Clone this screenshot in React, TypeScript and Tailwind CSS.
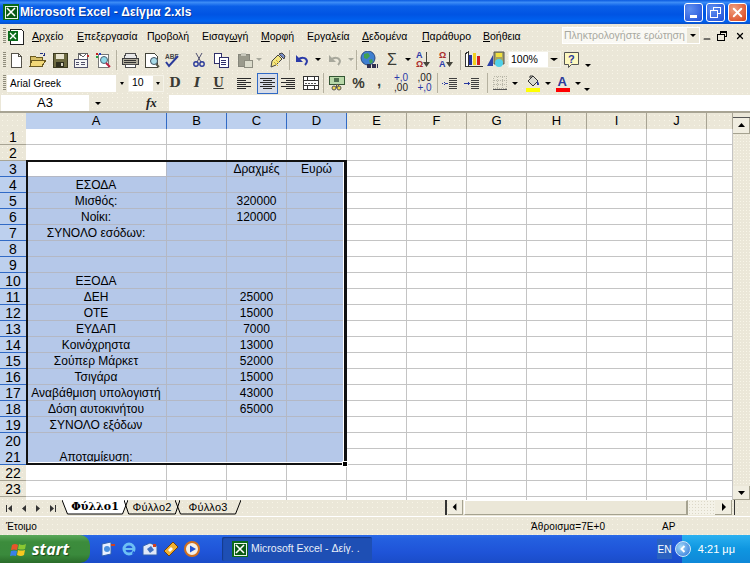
import React from 'react';
import { Minus, X } from 'lucide-react';

const COLS = ['A', 'B', 'C', 'D', 'E', 'F', 'G', 'H', 'I', 'J', ''];
const COL_W = ['w-[141px]', 'w-[60px]', 'w-[60px]', 'w-[60px]', 'w-[60px]', 'w-[60px]', 'w-[60px]', 'w-[60px]', 'w-[60px]', 'w-[60px]', 'w-[26px]'];

const DATA: Record<number, [string?, string?, string?, string?]> = {
  3: ['', '', 'Δραχμές', 'Ευρώ'],
  4: ['ΕΣΟΔΑ'],
  5: ['Μισθός:', '', '320000'],
  6: ['Νοίκι:', '', '120000'],
  7: ['ΣΥΝΟΛΟ εσόδων:'],
  10: ['ΕΞΟΔΑ'],
  11: ['ΔΕΗ', '', '25000'],
  12: ['ΟΤΕ', '', '15000'],
  13: ['ΕΥΔΑΠ', '', '7000'],
  14: ['Κοινόχρηστα', '', '13000'],
  15: ['Σούπερ Μάρκετ', '', '52000'],
  16: ['Τσιγάρα', '', '15000'],
  17: ['Αναβάθμιση υπολογιστή', '', '43000'],
  18: ['Δόση αυτοκινήτου', '', '65000'],
  19: ['ΣΥΝΟΛΟ εξόδων'],
  21: ['Αποταμίευση:'],
};

const Dots = 'bg-[#ebe7d8] bg-[radial-gradient(circle,#f8f5e8_0.8px,transparent_1px)] bg-[length:5px_5px]';

const Ico = ({ children, w = 16, h = 16 }: { children: React.ReactNode; w?: number; h?: number }) => (
  <svg width={w} height={h} viewBox={`0 0 ${w} ${h}`} shapeRendering="crispEdges">{children}</svg>
);

const Slot = ({ className, children }: { className: string; children?: React.ReactNode }) => (
  <div className={`${className} flex items-center justify-center shrink-0 h-full`}>{children}</div>
);

const Grip = () => (
  <div className="w-[3px] h-[16px] ml-[3px] shrink-0 bg-[repeating-linear-gradient(180deg,#8f8c7c_0_1px,#ebe7d8_1px_2px)]" />
);

const Sep = () => <div className="w-[1px] h-[20px] bg-[#b5b1a0] mx-[1px] shrink-0" />;

const Caret = ({ color = '#000', size = 5 }: { color?: string; size?: number }) => (
  <div
    className="w-0 h-0 border-x-[3px] border-x-transparent border-t-[3px]"
    style={{ borderTopColor: color, borderLeftWidth: size - 2, borderRightWidth: size - 2 }}
  />
);

const Chevron = () => (
  <div className="flex flex-col items-center justify-end h-full pb-[4px]">
    <Caret size={5} />
  </div>
);

const NewIcon = () => (
  <Ico><path d="M3 1h7l3 3v11H3z" fill="#fff" stroke="#55534a" /><path d="M10 1v3h3" fill="none" stroke="#55534a" /></Ico>
);
const OpenIcon = () => (
  <Ico w={18}>
    <path d="M1 4h5l1 1h6v9H1z" fill="#d8c068" stroke="#6b5a20" />
    <path d="M3 8h14l-4 6H1z" fill="#f2d878" stroke="#6b5a20" />
    <path d="M11 1h3M15 1v3M16 3l-2 1" stroke="#1f2f80" fill="none" />
  </Ico>
);
const SaveIcon = () => (
  <Ico>
    <path d="M1 1h14v14H1z" fill="#6d6a40" stroke="#3c3a20" />
    <path d="M4 2h8v5H4z" fill="#e8e4cf" />
    <path d="M4 10h8v5H4z" fill="#2d2d1c" />
    <path d="M9 11h2v3H9z" fill="#d8d4c0" />
  </Ico>
);
const MailIcon = () => (
  <Ico w={18}>
    <path d="M5 1h9v7H5z" fill="#fff" stroke="#666" />
    <path d="M5 1l5 4 4-4" fill="none" stroke="#666" />
    <path d="M14 3h2v2h-2z" fill="#c03030" />
    <path d="M1 7h13v8H1z" fill="#f4f4f4" stroke="#50506a" />
    <path d="M3 10h3M8 10h4M3 12h3M8 12h4" stroke="#50506a" fill="none" />
  </Ico>
);
const SearchDocIcon = () => (
  <Ico w={18}>
    <path d="M3 2h10v13H3z" fill="#fff" stroke="#777" />
    <path d="M1 1h2v2H1z" fill="#c02020" /><path d="M4 1h2v2H4z" fill="#2040c0" /><path d="M1 4h2v2H1z" fill="#20a040" />
    <circle cx="9" cy="8" r="3.5" fill="#8fd8e8" stroke="#506070" shapeRendering="auto" />
    <path d="M11 11l4 4" stroke="#c02040" strokeWidth="2" shapeRendering="auto" />
  </Ico>
);
const PrintIcon = () => (
  <Ico w={18}>
    <path d="M5 1h9l2 5H3z" fill="#e8e8e8" stroke="#505050" />
    <path d="M1 6h16v6H1z" fill="#b0ac9c" stroke="#3c3c3c" />
    <path d="M3 8h12M3 10h12" stroke="#303030" fill="none" />
    <path d="M4 12h10v3H4z" fill="#fff" stroke="#505050" />
  </Ico>
);
const PreviewIcon = () => (
  <Ico w={18}>
    <path d="M2 1h9l3 3v11H2z" fill="#fff" stroke="#45453a" />
    <circle cx="11" cy="9" r="3.5" fill="#a8dbe8" stroke="#3e5060" shapeRendering="auto" />
    <path d="M13 12l3 3" stroke="#5a5a4a" strokeWidth="2" shapeRendering="auto" />
  </Ico>
);
const SpellIcon = () => (
  <svg width="18" height="16" viewBox="0 0 18 16">
    <text x="1" y="6.5" fontSize="6.5" fontWeight="700" fontFamily="Liberation Sans" fill="#444">ΑΒΓ</text>
    <path d="M2 10l3 4 9-10" fill="none" stroke="#2a3a9a" strokeWidth="2" />
  </svg>
);
const CutIcon = () => (
  <svg width="16" height="16" viewBox="0 0 16 16">
    <path d="M5 1l5 9M11 1l-5 9" stroke="#505070" strokeWidth="1" fill="none" />
    <circle cx="5" cy="12" r="2.2" fill="none" stroke="#2a3a9a" strokeWidth="1.4" />
    <circle cx="11" cy="12" r="2.2" fill="none" stroke="#2a3a9a" strokeWidth="1.4" />
  </svg>
);
const CopyIcon = () => (
  <Ico>
    <path d="M1 1h7v10H1z" fill="#fff" stroke="#30306a" />
    <path d="M6 5h9v10H6z" fill="#fff" stroke="#30306a" />
    <path d="M8 8h5M8 10h5M8 12h5" stroke="#30306a" fill="none" />
  </Ico>
);
const PasteIcon = () => (
  <Ico>
    <path d="M1 2h11v12H1z" fill="#9a9a8c" stroke="#85857a" />
    <path d="M4 1h5v3H4z" fill="#c8c8bc" />
    <path d="M7 8h8v7H7z" fill="#dcdccc" stroke="#8d8d80" />
  </Ico>
);
const BrushIcon = () => (
  <svg width="18" height="16" viewBox="0 0 18 16">
    <path d="M4 9l6-6 4 4-6 6-5 2z" fill="#f4e680" stroke="#444" />
    <path d="M6 10l4 4M8 8l3 3" stroke="#d0b030" fill="none" />
    <path d="M11 2l3-1 3 3-1 3z" fill="#7a90c8" stroke="#444" />
  </svg>
);
const UndoIcon = ({ c }: { c: string }) => (
  <svg width="14" height="12" viewBox="0 0 14 12">
    <path d="M3 6c3-3 8-3 9 1 0 2-1 3-2 4" fill="none" stroke={c} strokeWidth="2" />
    <path d="M1 1v7h7z" fill={c} />
  </svg>
);
const GlobeIcon = () => (
  <svg width="20" height="18" viewBox="0 0 20 18">
    <circle cx="8" cy="7" r="7" fill="#3f7fd0" stroke="#2a4a80" />
    <path d="M4 3l4-1 2 3-3 3-3-1zM9 9l3-1 1 3-3 2z" fill="#40a050" />
    <path d="M7 14h11M7 16h11" stroke="#303050" strokeWidth="2" strokeDasharray="4 1" />
  </svg>
);
const SortIcon = ({ top, bot, topC, botC }: { top: string; bot: string; topC: string; botC: string }) => (
  <div className="flex items-center">
    <div className="flex flex-col text-[9px] leading-[9px] font-bold [font-family:'Liberation_Sans',sans-serif]">
      <span style={{ color: topC }}>{top}</span>
      <span style={{ color: botC }}>{bot}</span>
    </div>
    <svg width="7" height="15" viewBox="0 0 7 15"><path d="M3 0h1v10h3l-3.5 5L0 10h3z" fill="#45453c" /></svg>
  </div>
);
const ChartIcon = () => (
  <Ico w={20} h={17}>
    <path d="M1 3l3-2v14H1z" fill="#fff" stroke="#333" />
    <path d="M5 4h3v10H5z" fill="#2030a0" />
    <path d="M9 2h3v12H9z" fill="#f0d020" />
    <path d="M13 5h3v9h-3z" fill="#d02020" />
    <path d="M1 15h18" stroke="#333" />
  </Ico>
);
const DrawingIcon = () => (
  <svg width="20" height="18" viewBox="0 0 20 18">
    <path d="M8 1h10v12H8z" fill="#a8a460" stroke="#555" />
    <path d="M10 2h6v4h-6z" fill="#f0e040" />
    <path d="M1 15L7 4v11z" fill="#2c40a8" />
    <circle cx="13" cy="12" r="4" fill="#50d0e8" />
  </svg>
);
const HelpIcon = () => (
  <svg width="18" height="18" viewBox="0 0 18 18">
    <path d="M1.5 1.5h14v12h-7l-3 3v-3h-4z" fill="#fdf8c0" stroke="#555" />
    <text x="5" y="12" fontSize="11" fontWeight="700" fontFamily="Liberation Sans" fill="#2a3a9a">?</text>
  </svg>
);
const Lines = ({ rows }: { rows: [number, number][] }) => (
  <Ico w={15} h={13}>
    {rows.map(([x, w], i) => (
      <path key={i} d={`M${x} ${i * 2 + 1.5}h${w}`} stroke="#2a2a2a" />
    ))}
  </Ico>
);
const MergeIcon = () => (
  <Ico w={16} h={14}>
    <path d="M.5.5h15v13H.5z" fill="#fff" stroke="#333" />
    <path d="M.5 4.5h15M.5 9.5h15M4.5.5v4M11.5.5v4M4.5 9.5v4M11.5 9.5v4" stroke="#333" />
    <path d="M2 7h12" stroke="#555" strokeDasharray="2 1" />
  </Ico>
);
const CurrencyIcon = () => (
  <Ico w={18} h={16}>
    <path d="M1 1h15v8H1z" fill="#b8d8a8" stroke="#335533" />
    <circle cx="8.5" cy="5" r="2.5" fill="#507050" />
    <path d="M8 9h2v3H8z" fill="#f0d850" stroke="#555" />
    <circle cx="11" cy="13" r="2" fill="#f0d850" stroke="#555" shapeRendering="auto" />
    <circle cx="6" cy="13" r="2" fill="#f0d850" stroke="#555" shapeRendering="auto" />
  </Ico>
);
const IndentIcon = ({ flip }: { flip?: boolean }) => (
  <Ico w={16} h={13}>
    <path d="M7 1.5h8M7 3.5h8M7 5.5h8M7 7.5h8M7 9.5h8M7 11.5h8" stroke="#404040" />
    {flip ? <path d="M0 6h6v1H0zM3 4l-2 2.5L3 9z" fill="#2a3aa0" /> : <path d="M0 6h5v1H0zM4 4l2 2.5L4 9z" fill="#2a3aa0" />}
  </Ico>
);
const BorderIcon = () => (
  <Ico w={15} h={14}>
    <path d="M.5.5h13v12H.5zM4.5.5v12M9.5.5v12M.5 4.5h13M.5 8.5h13" fill="none" stroke="#b8b6a8" strokeDasharray="1 1" />
    <path d="M0 13.5h14" stroke="#555" />
  </Ico>
);
const FillIcon = () => (
  <svg width="16" height="18" viewBox="0 0 16 18">
    <path d="M3 7l5-5 5 5-5 5z" fill="#d8d8d0" stroke="#333" />
    <path d="M5 4V2h3" fill="none" stroke="#333" />
    <path d="M12 7c2 1 2 3 2 4h-2z" fill="#2a3aa0" />
    <path d="M1 14h14v4H1z" fill="#ffff00" />
  </svg>
);
const FontColorIcon = () => (
  <svg width="16" height="18" viewBox="0 0 16 18">
    <text x="2.5" y="12" fontSize="13" fontWeight="700" fontFamily="Liberation Sans" fill="#2a3a9a">A</text>
    <path d="M1 14h14v4H1z" fill="#ff0000" />
  </svg>
);
const XpStartFlag = () => (
  <svg width="17" height="17" viewBox="0 0 17 17">
    <path d="M2 4q3-2 6 0l-1 5q-3-1-6 0z" fill="#e8542a" />
    <path d="M9 3q3 2 7 0l-1 5q-3 1-7 0z" fill="#8ac832" />
    <path d="M1 10q3-1 6 0l-1 5q-3-1-6 0z" fill="#3a80e8" />
    <path d="M8 9q3 1 7 0l-1 5q-3 2-7 0z" fill="#f8c820" />
  </svg>
);
const ExcelMark = ({ size = 16 }: { size?: number }) => (
  <svg width={size} height={size} viewBox="0 0 16 16" shapeRendering="crispEdges">
    <path d="M0 0h16v16H0z" fill="#0a6a1a" />
    <path d="M2 2h12v12H2z" fill="#0a5a14" stroke="#e8f4e8" />
    <path d="M4 4l8 8M12 4l-8 8" stroke="#fff" strokeWidth="1.6" shapeRendering="auto" />
  </svg>
);

const ArrowBtn = ({ dir, className = '' }: { dir: 'up' | 'down' | 'left' | 'right'; className?: string }) => {
  const arrow = {
    up: 'M4 8l3.5-4 3.5 4z',
    down: 'M4 5h7l-3.5 4z',
    left: 'M9 3v8L5 7z',
    right: 'M6 3v8l4-4z',
  }[dir];
  return (
    <div className={`${className} bg-[#f0ede0] border-r border-b border-[#a5a290] flex items-center justify-center shrink-0`}>
      <svg width="15" height="14" viewBox="0 0 15 14"><path d={arrow} fill="#000" /></svg>
    </div>
  );
};

const Tab = ({ label, active, className }: { label: string; active?: boolean; className: string }) => (
  <div className={`${className} relative h-[15px] shrink-0 flex items-center justify-center`}>
    <svg className="absolute inset-0 w-full h-full" viewBox="0 0 60 15" preserveAspectRatio="none">
      <path d="M0 0l5 14H55L60 0" fill={active ? '#fff' : 'none'} stroke="#000" strokeWidth="1" vectorEffect="non-scaling-stroke" />
    </svg>
    <span className={`relative ${active ? "font-bold text-[11px] [font-family:'DejaVu_Serif',serif]" : 'text-[11px] tracking-[0.2px]'} text-black`}>{label}</span>
  </div>
);

export default function App() {
  const rows = Array.from({ length: 24 }, (_, i) => i + 1);

  return (
    <div className="w-[750px] h-[563px] overflow-hidden flex flex-col bg-white text-black text-[11px] [font-family:'Liberation_Sans',Arial,sans-serif]">
      {/* title bar */}
      <div className="h-[24px] shrink-0 flex items-center bg-[linear-gradient(180deg,#0a5ae0_0%,#3c8cf6_10%,#0a5fe8_26%,#0054e3_60%,#0062f0_88%,#0a4fc8_100%)]">
        <div className="ml-[3px] mr-[1px]"><ExcelMark /></div>
        <span className="text-white font-bold text-[12px] tracking-[0.1px] [text-shadow:1px_1px_0_#0a3a9a]">
          Microsoft Excel - Δείγμα 2.xls
        </span>
        <div className="ml-auto flex items-center gap-[3px] mr-[3px]">
          <div className="w-[19px] h-[19px] rounded-[3px] border border-white bg-[radial-gradient(circle_at_30%_30%,#5f8ff0,#1f4fd8)] flex items-end justify-center pb-[3px]">
            <div className="w-[7px] h-[3px] bg-white" />
          </div>
          <div className="w-[19px] h-[19px] rounded-[3px] border border-white bg-[radial-gradient(circle_at_30%_30%,#5f8ff0,#1f4fd8)] flex items-center justify-center">
            <svg width="11" height="11" viewBox="0 0 11 11" shapeRendering="crispEdges"><path d="M3.5 3.5v-3h7v6h-3M.5 3.5h7v7h-7z" fill="none" stroke="#fff" /></svg>
          </div>
          <div className="w-[19px] h-[19px] rounded-[3px] border border-white bg-[radial-gradient(circle_at_30%_30%,#f0a080,#d84018)] flex items-center justify-center">
            <X size={15} strokeWidth={3} color="#fff" />
          </div>
        </div>
      </div>

      {/* menu bar */}
      <div className={`h-[24px] shrink-0 flex items-center ${Dots} text-[10.5px] leading-none text-black`}>
        <Grip />
        <div className="w-[21px] mr-[6px] flex justify-center shrink-0 -ml-[1px]">
          <svg width="17" height="17" viewBox="0 0 17 17" shapeRendering="crispEdges">
            <path d="M3 1h11l2 2v13H3z" fill="#fff" stroke="#222" />
            <path d="M1 3h10v10H1z" fill="#0a6a1a" />
            <path d="M3 5l6 6M9 5l-6 6" stroke="#fff" strokeWidth="1.4" shapeRendering="auto" />
          </svg>
        </div>
        <span className="w-[45px] shrink-0"><u>Α</u>ρχείο</span>
        <span className="w-[70px] shrink-0"><u>Ε</u>πεξεργασία</span>
        <span className="w-[55px] shrink-0">Π<u>ρ</u>οβολή</span>
        <span className="w-[59px] shrink-0">Εισαγ<u>ω</u>γή</span>
        <span className="w-[46px] shrink-0"><u>Μ</u>ορφή</span>
        <span className="w-[55px] shrink-0">Εργα<u>λ</u>εία</span>
        <span className="w-[60px] shrink-0"><u>Δ</u>εδομένα</span>
        <span className="w-[61px] shrink-0"><u>Π</u>αράθυρο</span>
        <span className="w-[79px] shrink-0"><u>Β</u>οήθεια</span>
        <div className="w-[138px] h-[17px] bg-white/70 border border-white flex items-center shrink-0 -mt-[1px]">
          <span className="text-[#a8a8a0] text-[10.5px] flex-1 whitespace-nowrap overflow-hidden pl-[1px]">Πληκτρολογήστε ερώτηση</span>
          <div className="w-[12px] h-full bg-[#ebe7d8] flex items-center justify-center shrink-0"><Caret size={5} /></div>
        </div>
        <div className="w-[14px] flex justify-center shrink-0"><Minus size={10} strokeWidth={2.5} className="mt-[6px]" /></div>
        <div className="w-[16px] flex justify-center shrink-0">
          <svg width="10" height="10" viewBox="0 0 10 10" shapeRendering="crispEdges"><path d="M3 2.5V.5h6.5v5H7M.5 3h6.5v6H.5z" fill="none" stroke="#000" /><path d="M.5 3.5h6.5M3 1h6.5" stroke="#000" /></svg>
        </div>
        <div className="w-[20px] flex justify-center shrink-0"><X size={10} strokeWidth={3} /></div>
      </div>

      {/* standard toolbar */}
      <div className={`h-[23px] shrink-0 flex items-center ${Dots}`}>
        <Grip />
        <Slot className="w-[21px] ml-[-1px]"><NewIcon /></Slot>
        <Slot className="w-[23px]"><OpenIcon /></Slot>
        <Slot className="w-[22px]"><SaveIcon /></Slot>
        <Slot className="w-[21px]"><MailIcon /></Slot>
        <Slot className="w-[23px]"><SearchDocIcon /></Slot>
        <Sep />
        <Slot className="w-[23px]"><PrintIcon /></Slot>
        <Slot className="w-[21px]"><PreviewIcon /></Slot>
        <Slot className="w-[22px]"><SpellIcon /></Slot>
        <div className="w-[4px] shrink-0" />
        <Slot className="w-[22px]"><CutIcon /></Slot>
        <Slot className="w-[22px]"><CopyIcon /></Slot>
        <div className="w-[2px] shrink-0" />
        <Slot className="w-[22px]"><PasteIcon /></Slot>
        <Slot className="w-[6px]"><Caret color="#a8a89c" /></Slot>
        <div className="w-[4px] shrink-0" />
        <Slot className="w-[22px]"><BrushIcon /></Slot>
        <Sep />
        <Slot className="w-[22px]"><UndoIcon c="#2a3aa8" /></Slot>
        <Slot className="w-[10px]"><Caret /></Slot>
        <div className="w-[1px] shrink-0" />
        <Slot className="w-[22px]"><UndoIcon c="#a8a89c" /></Slot>
        <Slot className="w-[9px]"><Caret color="#a8a89c" /></Slot>
        <Sep />
        <Slot className="w-[23px]"><GlobeIcon /></Slot>
        <Slot className="w-[22px]"><span className="text-[16px] text-[#3c3c34] leading-none">Σ</span></Slot>
        <Slot className="w-[10px]"><Caret /></Slot>
        <Slot className="w-[20px]"><SortIcon top="Α" bot="Ω" topC="#2a3aa8" botC="#a82a2a" /></Slot>
        <Slot className="w-[26px]"><SortIcon top="Ω" bot="Α" topC="#a82a2a" botC="#2a3aa8" /></Slot>
        <Sep />
        <Slot className="w-[24px]"><ChartIcon /></Slot>
        <Slot className="w-[20px]"><DrawingIcon /></Slot>
        <div className="w-[53px] h-[17px] ml-[2px] bg-white border border-[#f4f2e8] flex items-center shrink-0">
          <span className="flex-1 pl-[2px] text-[10.5px]">100%</span>
          <div className="w-[12px] h-full bg-[#ebe7d8] flex items-center justify-center"><Caret size={6} /></div>
        </div>
        <Slot className="w-[22px]"><HelpIcon /></Slot>
        <Slot className="w-[9px]"><Chevron /></Slot>
      </div>

      {/* formatting toolbar */}
      <div className={`h-[24px] shrink-0 flex items-center ${Dots}`}>
        <Grip />
        <div className="w-[121px] h-[17px] ml-[1px] bg-white flex items-center shrink-0">
          <span className="flex-1 pl-[3px] text-[10px] tracking-[0.1px]">Arial Greek</span>
          <div className="w-[12px] h-full bg-[#ebe7d8] flex items-center justify-center"><Caret size={4} /></div>
        </div>
        <div className="w-[36px] h-[17px] bg-white border border-[#f4f2e8] flex items-center shrink-0">
          <span className="flex-1 pl-[3px] text-[10.5px]">10</span>
          <div className="w-[10px] h-full bg-[#ebe7d8] flex items-center justify-center"><Caret size={4} /></div>
        </div>
        <Slot className="w-[22px]"><b className="text-[13px] text-[#3a3a34] [font-family:'DejaVu_Serif',serif]">D</b></Slot>
        <Slot className="w-[22px]"><i className="text-[13px] font-bold text-[#3a3a34] [font-family:'DejaVu_Serif',serif]">I</i></Slot>
        <Slot className="w-[21px]"><b className="text-[12px] underline text-[#3a3a34] [font-family:'DejaVu_Serif',serif]">U</b></Slot>
        <div className="w-[4px] shrink-0" />
        <Slot className="w-[22px]"><Lines rows={[[0, 14], [0, 9], [0, 14], [0, 9], [0, 14], [0, 9]]} /></Slot>
        <div className="w-[2px] shrink-0" />
        <div className="w-[21px] h-[21px] shrink-0 border border-[#316ac5] bg-[#d8dde8] flex items-center justify-center">
          <Lines rows={[[0, 15], [3, 9], [0, 15], [3, 9], [0, 15], [3, 9]]} />
        </div>
        <Slot className="w-[21px]"><Lines rows={[[0, 14], [5, 9], [0, 14], [5, 9], [0, 14], [5, 9]]} /></Slot>
        <Slot className="w-[23px]"><MergeIcon /></Slot>
        <Sep />
        <Slot className="w-[23px]"><CurrencyIcon /></Slot>
        <Slot className="w-[21px]"><span className="text-[14px] text-[#3a3a34] leading-none font-bold">%</span></Slot>
        <Slot className="w-[20px]"><span className="text-[15px] font-bold text-[#3a3a34] leading-none -mt-[6px]">,</span></Slot>
        <Slot className="w-[24px]">
          <span className="text-[10px] leading-[10px] text-[#2a3aa8] whitespace-pre text-center">+,0<br /><span className="text-[#222]">,00</span></span>
        </Slot>
        <Slot className="w-[23px]">
          <span className="text-[10px] leading-[10px] text-[#222] whitespace-pre text-center">,00<br /><span className="text-[#2a3aa8]">+,0</span></span>
        </Slot>
        <Sep />
        <Slot className="w-[22px]"><IndentIcon flip /></Slot>
        <Slot className="w-[22px]"><IndentIcon /></Slot>
        <div className="w-[3px] shrink-0" />
        <Sep />
        <Slot className="w-[22px]"><BorderIcon /></Slot>
        <Slot className="w-[8px]"><Caret /></Slot>
        <div className="w-[3px] shrink-0" />
        <Slot className="w-[22px]"><FillIcon /></Slot>
        <Slot className="w-[8px]"><Caret /></Slot>
        <Slot className="w-[22px]"><FontColorIcon /></Slot>
        <Slot className="w-[8px]"><Caret /></Slot>
        <Slot className="w-[9px]"><Chevron /></Slot>
      </div>

      {/* formula bar */}
      <div className={`h-[18px] shrink-0 flex ${Dots} border-b-[2px] border-[#a8a494]`}>
        <div className="w-[88px] ml-[1px] bg-white text-center text-[13px] leading-[16px] shrink-0">A3</div>
        <div className="w-[17px] flex items-center justify-center shrink-0"><Caret size={5} /></div>
        <div className="flex-1 flex">
          <i className="ml-[40px] w-[23px] font-bold [font-family:'Liberation_Serif',serif] text-[13px] leading-[15px] shrink-0 text-[#222]">fx</i>
          <div className="flex-1 bg-white" />
        </div>
      </div>

      {/* sheet */}
      <div className="h-[387px] shrink-0 flex">
        <div className="w-[733px] shrink-0 relative overflow-hidden">
          <div className="flex h-[16px]">
            <div className={`w-[26px] shrink-0 ${Dots}`} />
            {COLS.map((c, i) => (
              <div
                key={i}
                className={`${COL_W[i]} shrink-0 text-center text-[13px] leading-[15px] ${
                  i < 4 ? 'bg-[#bdd0ee] border-r border-[#316ac5]' : `${Dots} border-r border-[#a8a494]`
                }`}
              >
                {c}
              </div>
            ))}
          </div>
          {rows.map((r) => {
            const sel = r >= 3 && r <= 21;
            const noLine = r === 20;
            const row = DATA[r] ?? [];
            return (
              <div key={r} className="flex h-[16px]">
                <div
                  className={`w-[26px] shrink-0 text-center text-[14px] leading-[16px] ${
                    sel
                      ? `bg-[#bdd0ee] ${noLine ? '' : 'border-b border-[#316ac5]'}`
                      : `${Dots} border-b border-[#a8a494]`
                  }`}
                >
                  {r}
                </div>
                {COLS.map((_, i) => {
                  const inSel = sel && i < 4;
                  const active = r === 3 && i === 0;
                  return (
                    <div
                      key={i}
                      className={`${COL_W[i]} shrink-0 whitespace-nowrap overflow-hidden text-center text-[12px] leading-[16px] border-r ${
                        active
                          ? 'bg-white border-[#b4b8c4]'
                          : inSel
                            ? 'bg-[#b5c8e9] border-[#b4b8c4]'
                            : 'bg-white border-[#c4c4c4]'
                      } ${noLine && i < 4 ? '' : inSel || active ? 'border-b border-b-[#b4b8c4]' : 'border-b border-b-[#c4c4c4]'}`}
                    >
                      {row[i] ?? ''}
                    </div>
                  );
                })}
              </div>
            );
          })}
          {/* selection frame */}
          <div className="absolute left-[26px] top-[47px] w-[321px] h-[305px] border-2 border-r-[3px] border-[#111] pointer-events-none shadow-[inset_-1px_-1px_0_#fff]">
            <div className="absolute -right-[4px] -bottom-[4px] w-[6px] h-[6px] bg-black border border-white" />
          </div>
        </div>
        {/* vertical scrollbar */}
        <div className="w-[17px] shrink-0 flex flex-col bg-[#ebe7d8]">
          <div className="h-[5px] shrink-0 border-b border-[#555]" />
          <ArrowBtn dir="up" className="h-[16px]" />
          <div className="flex-1 bg-[#ebe7d8] bg-[radial-gradient(circle,#f8f5e8_0.8px,transparent_1px)] bg-[length:3px_3px]" />
          <ArrowBtn dir="down" className="h-[14px]" />
        </div>
      </div>

      {/* sheet tabs + horizontal scrollbar */}
      <div className={`h-[17px] shrink-0 flex items-start ${Dots} border-b border-white`}>
        <div className="w-[60px] h-full flex items-center justify-around shrink-0 pl-[2px]">
          <svg width="7" height="7" viewBox="0 0 7 7"><path d="M0 0h1v7H0zM6 0v7L2 3.5z" fill="#333" /></svg>
          <svg width="7" height="7" viewBox="0 0 7 7"><path d="M6 0v7L2 3.5z" fill="#333" /></svg>
          <svg width="7" height="7" viewBox="0 0 7 7"><path d="M1 0v7l4-3.5z" fill="#333" /></svg>
          <svg width="7" height="7" viewBox="0 0 7 7"><path d="M1 0v7l4-3.5zM6 0h1v7H6z" fill="#333" /></svg>
        </div>
        <Tab label="Φύλλο1" active className="w-[66px] ml-[2px]" />
        <Tab label="Φύλλο2" className="w-[56px] -ml-[4px]" />
        <Tab label="Φύλλο3" className="w-[66px] -ml-[5px]" />
        <div className="w-[2px] h-[15px] ml-[204px] bg-[#333] shrink-0" />
        <div className="w-[1px] shrink-0" />
        <ArrowBtn dir="left" className="w-[15px] h-[15px]" />
        <div className="w-[224px] h-[15px] ml-[1px] bg-[#ebe7d8] border-r-2 border-b border-[#a5a290] border-t border-t-white border-l border-l-white shrink-0" />
        <div className="w-[27px] h-[15px] bg-[#f4f2e8] bg-[radial-gradient(circle,#dcd8c8_0.8px,transparent_1px)] bg-[length:3px_3px] shrink-0" />
        <ArrowBtn dir="right" className="w-[17px] h-[15px]" />
        <div className="w-[1px] h-[15px] ml-[2px] bg-[#333] shrink-0" />
      </div>

      {/* status bar */}
      <div className={`h-[18px] shrink-0 flex items-center ${Dots} text-[10px]`}>
        <span className="w-[531px] pl-[6px] shrink-0">Έτοιμο</span>
        <span className="w-[131px] shrink-0 tracking-[0.1px]">Άθροισμα=7E+0</span>
        <span>ΑΡ</span>
      </div>

      {/* taskbar */}
      <div className="h-[28px] shrink-0 flex items-center bg-[linear-gradient(180deg,#2a6ae8_0%,#2460e0_12%,#1f54d8_60%,#1a4cc8_100%)]">
        <div className="w-[90px] h-full shrink-0 flex items-center gap-[5px] pl-[10px] rounded-r-[10px] bg-[linear-gradient(180deg,#5aa85a_0%,#3c8c3c_25%,#3a8a3c_70%,#2a6c2a_100%)]">
          <XpStartFlag />
          <span className="text-white font-bold italic text-[16px] [font-family:'Open_Sans',sans-serif] [text-shadow:1px_1px_1px_#1a4a1a]">start</span>
        </div>
        <div className="w-[10px] shrink-0" />
        <div className="flex items-center gap-[5px] w-[122px] shrink-0">
          <svg width="16" height="16" viewBox="0 0 16 16"><path d="M2 3l9-2v12l-9 2z" fill="#e8f0ff" stroke="#3060b0" /><circle cx="7" cy="8" r="3" fill="#4a90e0" /><path d="M11 3h4v2h-4z" fill="#d04020" /></svg>
          <svg width="16" height="16" viewBox="0 0 16 16"><circle cx="8" cy="8" r="5" fill="none" stroke="#6cc0f4" strokeWidth="3" /><path d="M4 8h8" stroke="#6cc0f4" strokeWidth="2" /><path d="M12 10l3 2-4 1z" fill="#1f54d8" /></svg>
          <svg width="16" height="16" viewBox="0 0 16 16"><path d="M1 5l7-3 7 3v9H1z" fill="#dfe8f8" stroke="#3060b0" /><path d="M5 8l4-3 3 4-4 3z" fill="#4070c0" /><path d="M11 3h3v3h-3z" fill="#d04020" /></svg>
          <svg width="16" height="16" viewBox="0 0 16 16"><path d="M1 10L10 1l5 5-9 9z" fill="#f0b030" stroke="#704010" /><path d="M5 9l3-3 2 2-3 3z" fill="#fff" /></svg>
          <svg width="16" height="16" viewBox="0 0 16 16"><circle cx="8" cy="8" r="7" fill="#f4f0e8" stroke="#d07020" strokeWidth="2" /><path d="M6 4.5v7l6-3.5z" fill="#1f54d8" /></svg>
        </div>
        <div className="w-[150px] h-[24px] shrink-0 bg-[#1e4fb4] rounded-[2px] flex items-center gap-[3px] pl-[10px] text-[10.5px] text-[#e8eef8] shadow-[inset_1px_1px_1px_#143a8a]">
          <ExcelMark />
          <span className="whitespace-nowrap">Microsoft Excel - Δείγ. .</span>
        </div>
        <div className="ml-auto w-[15px] h-[20px] flex items-center justify-center text-white text-[10px] bg-[#2a62c0] mr-[10px]">EN</div>
        <div className="w-[68px] h-full shrink-0 relative flex items-center justify-end pr-[15px] text-white text-[11px] bg-[linear-gradient(180deg,#2ab0f0_0%,#0f96e0_50%,#0f88d8_100%)]">
          <div className="absolute -left-[7px] top-[6px] w-[16px] h-[16px] rounded-full bg-[radial-gradient(circle_at_35%_35%,#a0d8f8,#2a70d8)] border border-[#d0e8f8] flex items-center justify-center">
            <svg width="8" height="8" viewBox="0 0 8 8"><path d="M5.5 1L2.5 4l3 3" fill="none" stroke="#fff" strokeWidth="2" /></svg>
          </div>
          <span>4:21 μμ</span>
        </div>
      </div>
    </div>
  );
}
